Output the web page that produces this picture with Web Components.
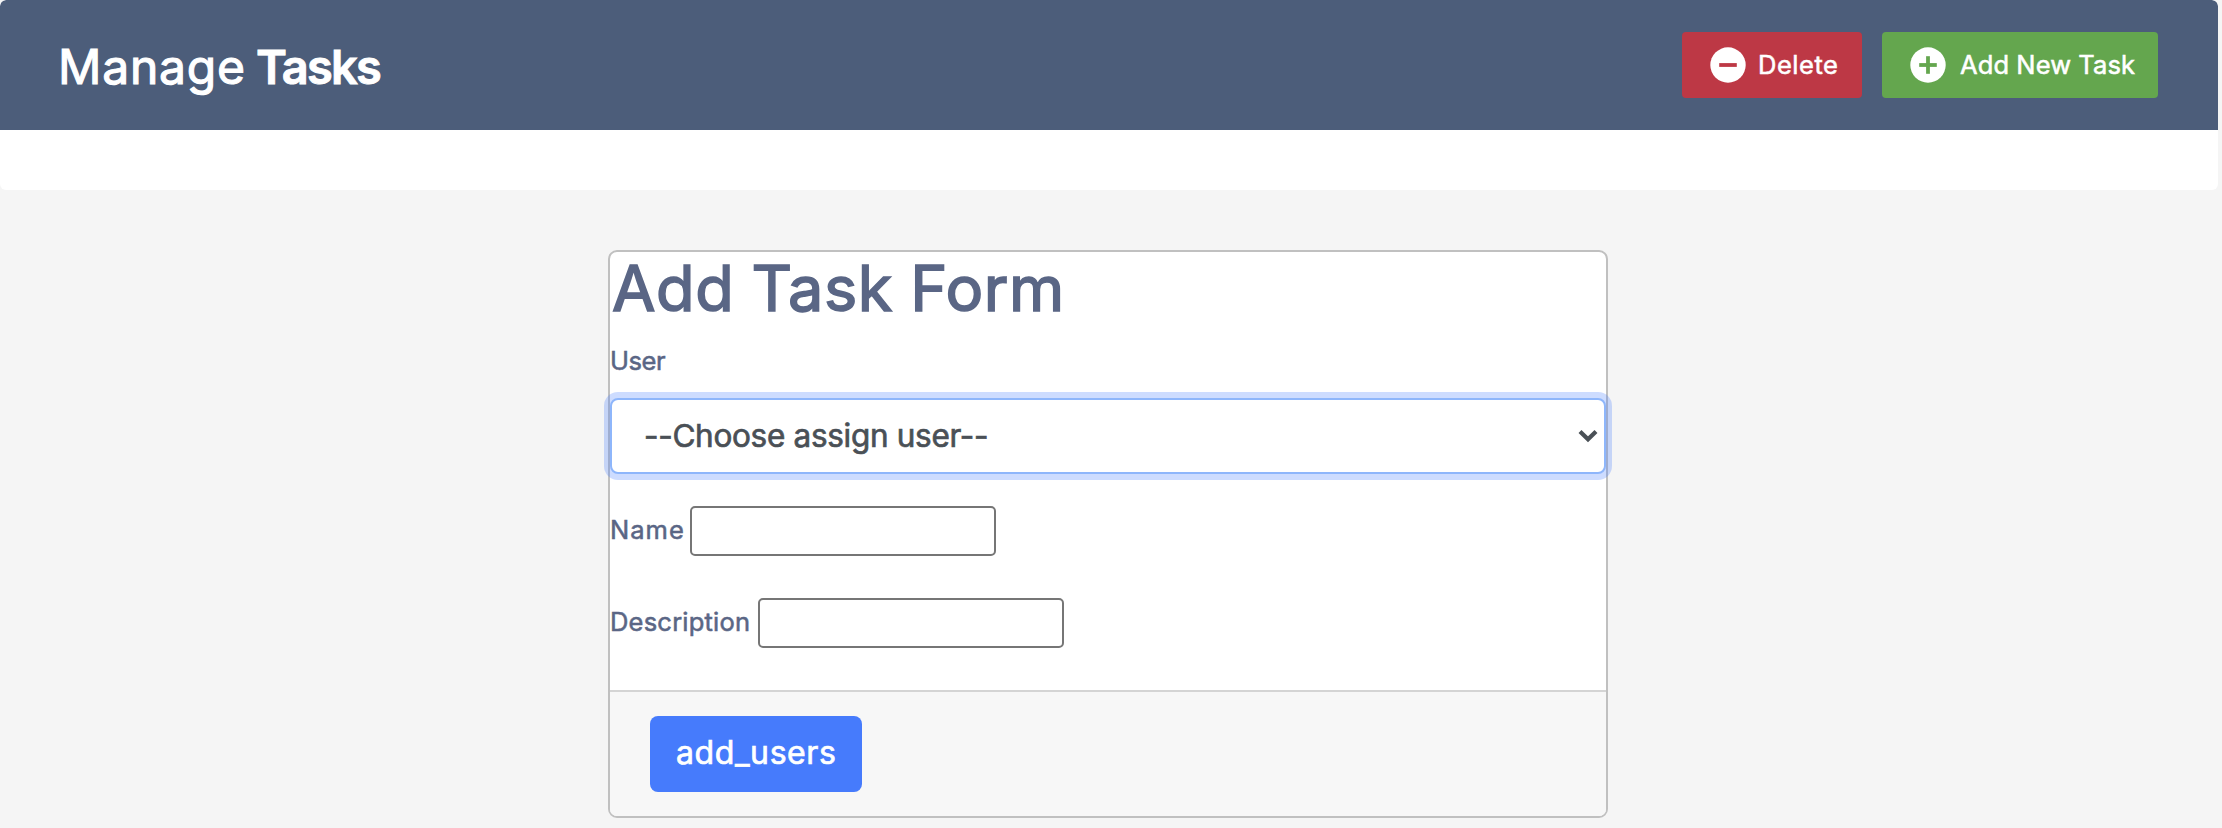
<!DOCTYPE html>
<html lang="en">
<head>
<meta charset="utf-8">
<title>Manage Tasks</title>
<style>
html,body{margin:0;height:828px;overflow:hidden;background:#f5f5f5}
body{font-family:"Inter","Open Sans",sans-serif;font-weight:400}
</style>
</head>
<body>
<task-page></task-page>
<script>
const define = (name, html) => {
  const t = document.createElement('template');
  t.innerHTML = html;
  customElements.define(name, class extends HTMLElement {
    constructor() {
      super();
      this.attachShadow({ mode: 'open' }).append(t.content.cloneNode(true));
    }
  });
};

/* A line of text spaced out to a given ink width: size, ink, word (extra word spacing), stroke, weight */
class FitText extends HTMLElement {
  connectedCallback() {
    const text = this.textContent, n = k => +this.getAttribute(k) || 0;
    const size = n('size'), weight = this.getAttribute('weight') || 400, word = n('word');
    const c = document.createElement('canvas').getContext('2d');
    c.font = `${weight} ${size}px Inter`;
    const m = c.measureText(text);
    const raw = m.actualBoundingBoxLeft + m.actualBoundingBoxRight;
    const spaces = text.split(' ').length - 1;
    const ls = (n('ink') - raw - word * spaces) / (text.length - 1);
    const root = this.shadowRoot || this.attachShadow({ mode: 'open' });
    root.innerHTML = `<style>
      :host{display:block;flex:none;width:${n('ink')}px;white-space:nowrap;font-size:${size}px;font-weight:${weight};line-height:${n('line') || 40}px;font-kerning:normal;font-variant-ligatures:none;font-feature-settings:"calt" 0}
      span{display:block;margin-left:${m.actualBoundingBoxLeft}px;letter-spacing:${ls}px;word-spacing:${word}px;-webkit-text-stroke:${n('stroke')}px currentColor;stroke-linejoin:round}
    </style><span><slot></slot></span>`;
  }
}
customElements.define('fit-text', FitText);

define('round-icon', `<style>
  :host{display:block;flex:none;width:36px;height:36px}
  svg{display:block}
  .v{display:none}
  :host([plus]) .v{display:block}
</style>
<svg width="36" height="36" viewBox="0 0 36 36"><circle cx="18" cy="18" r="17.7" fill="#fff"/>
<g stroke="var(--tone)" stroke-width="3.8"><path d="M9.2 18h17.6"/><path class="v" d="M18 9.2v17.6"/></g></svg>`);

define('action-button', `<style>
  :host{display:flex;box-sizing:border-box;height:66px;align-items:center;gap:14.5px;padding-left:27.5px;border-radius:4px;background:var(--tone);color:#fff}
</style><slot></slot>`);

define('page-header', `<style>
  :host{display:block;width:2218px;height:190px;background:#fff;border-radius:6px;overflow:hidden}
  header{box-sizing:border-box;height:130px;display:flex;align-items:flex-start;justify-content:space-between;padding:32px 60px 0 62px;background:#4c5d7a;color:#fff;border-radius:6px 6px 0 0}
  h2{margin:5px 0 0;display:flex;gap:14px}
  nav{display:flex;gap:20px}
  .del{width:180px;--tone:#bd3845}
  .add{width:276px;--tone:#64a64e}
</style>
<header>
  <h2><fit-text size="48" ink="181" line="60" stroke="1.1">Manage</fit-text><fit-text size="47" ink="123" line="60" weight="600" stroke=".9">Tasks</fit-text></h2>
  <nav>
    <action-button class="del"><round-icon></round-icon><fit-text size="25.500" ink="77" stroke=".55">Delete</fit-text></action-button>
    <action-button class="add"><round-icon plus></round-icon><fit-text size="25.500" ink="175" stroke=".55">Add New Task</fit-text></action-button>
  </nav>
</header>`);

define('user-select', `<style>
  :host{display:flex;box-sizing:border-box;width:996px;height:76px;align-items:center;justify-content:space-between;padding:0 6px 0 34px;background:#fff;border:2px solid #8eb6fb;border-radius:8px;box-shadow:0 0 0 6px rgba(70,126,254,.27);color:#4a5056}
  ::slotted(fit-text){margin-top:-1px}
</style><slot></slot>
<svg width="20" height="14" viewBox="0 0 20 14"><path d="M2 2.500 10 10.300l8-7.800" fill="none" stroke="#4a5056" stroke-width="4.200"/></svg>`);

define('form-field', `<style>
  :host{display:flex;height:50px;align-items:center}
  ::slotted(fit-text){margin-top:-2px}
  input{box-sizing:border-box;width:306px;height:50px;margin:0;padding:2px 4px;background:#fff;border:2px solid #767676;border-radius:5px;outline:0}
</style><slot></slot><input type="text" aria-label="value">`);

define('task-form', `<style>
  :host{display:flex;flex-direction:column;box-sizing:border-box;width:1000px;height:568px;margin:60px 0 0 608px;background:#fff;border:2px solid #c0c0c0;border-radius:9px;color:#5a6685}
  main{height:438px;box-sizing:border-box}
  h1{margin:0;padding:0 0 0 3px;height:77px;font-weight:400}
  .user{margin:12px 0 0 2px;height:40px}
  user-select{margin-top:17px}
  form-field{margin-left:2px}
  .name{margin-top:32px;gap:7px}
  .desc{margin-top:42px;gap:9px}
  footer{height:126px;box-sizing:border-box;border-top:2px solid #d4d4d4;background:#f7f7f7;border-radius:0 0 7px 7px;padding:24px 0 0 40px}
  button{display:flex;box-sizing:border-box;width:212px;height:76px;align-items:center;padding:0 0 2px 27px;border:0;border-radius:8px;background:#467bfc;color:#fff;font-family:inherit}
</style>
<main>
  <h1><fit-text size="63" ink="447" line="72" word="-1" stroke="1.6">Add Task Form</fit-text></h1>
  <fit-text class="user" size="25.500" ink="54" stroke=".55">User</fit-text>
  <user-select><fit-text size="31.500" ink="341" stroke=".7">--Choose assign user--</fit-text></user-select>
  <form-field class="name"><fit-text size="25.500" ink="71" stroke=".55">Name</fit-text></form-field>
  <form-field class="desc"><fit-text size="25.500" ink="137" stroke=".55">Description</fit-text></form-field>
</main>
<footer><button type="button"><fit-text size="32" ink="158" stroke=".7">add_users</fit-text></button></footer>`);

define('task-page', `<style>:host{display:block;height:828px;overflow:hidden}</style>
<page-header></page-header><task-form></task-form>`);
</script>
</body>
</html>
